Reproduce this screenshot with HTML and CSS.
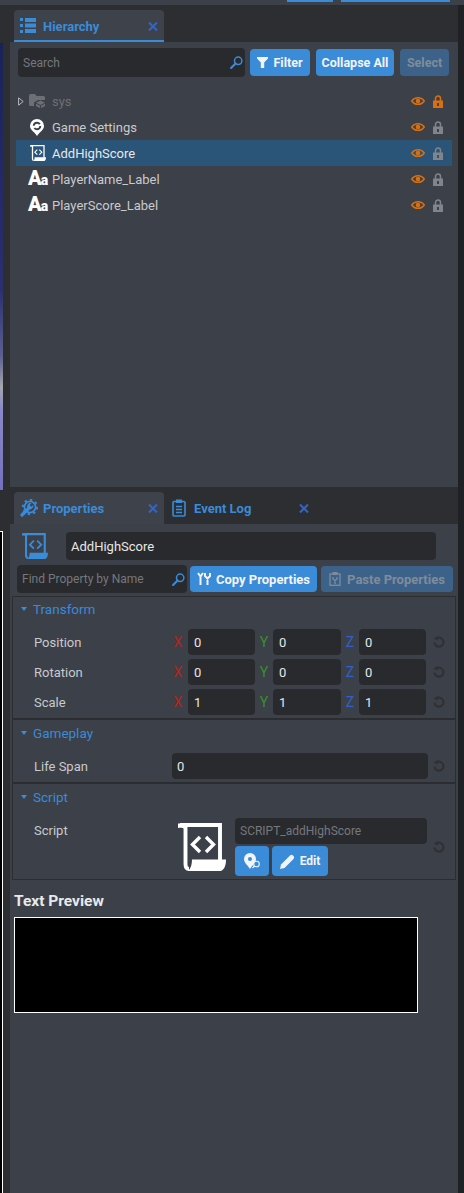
FILE: index.html
```html
<!DOCTYPE html>
<html lang="en">
<head>
    <meta charset="UTF-8">
    <title>Hierarchy and Properties</title>
    <link rel="stylesheet" href="styles.css">
</head>
<body>
    <svg class="sprite" xmlns="http://www.w3.org/2000/svg">
        <symbol id="i-list" viewBox="0 0 16 16">
            <path d="M0 0h3v3H0zM0 6h3v3H0zM0 12h3v3H0zM5 0h11v4H5zM5 5.500h11v4H5zM5 11h11v4H5z" fill="currentColor"/>
        </symbol>
        <symbol id="i-close" viewBox="0 0 10 9">
            <path d="M1 .5L9 8.500M9 .5L1 8.500" fill="none" stroke="currentColor" stroke-width="2.100"/>
        </symbol>
        <symbol id="i-gear" viewBox="0 0 18 18">
            <circle cx="10" cy="8" r="5.600" fill="none" stroke="currentColor" stroke-width="1.700"/>
            <circle cx="10" cy="8" r="7.200" fill="none" stroke="currentColor" stroke-width="1.900" stroke-dasharray="2.400 3.200"/>
            <path d="M2 16L9 9" fill="none" stroke="currentColor" stroke-width="3.200" stroke-linecap="round"/>
            <path d="M8 9.500A3.400 3.400 0 0 1 11.500 4L9.800 6.200l1.400 1.500 2.200-1.600A3.400 3.400 0 0 1 8 9.500z" fill="currentColor"/>
        </symbol>
        <symbol id="i-clipboard" viewBox="0 0 14 18">
            <rect x="1" y="2.500" width="12" height="14.500" rx="1" fill="none" stroke="currentColor" stroke-width="1.600"/>
            <rect x="4" y="0.500" width="6" height="3.500" fill="currentColor"/>
            <path d="M4 7.500h6M4 10.500h6M4 13.500h6" stroke="currentColor" stroke-width="1.500"/>
        </symbol>
        <symbol id="i-search" viewBox="0 0 14 14">
            <circle cx="8.800" cy="5.200" r="4" fill="none" stroke="currentColor" stroke-width="1.600"/>
            <path d="M6 8L1.200 12.800" stroke="currentColor" stroke-width="2.300" stroke-linecap="round"/>
        </symbol>
        <symbol id="i-funnel" viewBox="0 0 11 11">
            <path d="M0 0h11v1.600L7.200 5.400V11H3.800V5.400L0 1.600z" fill="currentColor"/>
        </symbol>
        <symbol id="i-caret" viewBox="0 0 6 9">
            <path d="M.6 .8L5.200 4.500 .6 8.200z" fill="none" stroke="currentColor" stroke-width="1"/>
        </symbol>
        <symbol id="i-eye" viewBox="0 0 14 10">
            <path d="M.8 5C3.600 .6 10.400 .6 13.200 5 10.400 9.400 3.600 9.400 .8 5z" fill="none" stroke="currentColor" stroke-width="1.500"/>
            <circle cx="7" cy="5" r="2.300" fill="currentColor"/>
        </symbol>
        <symbol id="i-lock" viewBox="0 0 10 13">
            <path d="M2.500 6V3.600a2.500 2.500 0 0 1 5 0V6" fill="none" stroke="currentColor" stroke-width="1.500"/>
            <path d="M0 5.500h10V13H0zM4 8v3h2V8z" fill="currentColor" fill-rule="evenodd"/>
        </symbol>
        <symbol id="i-reset" viewBox="0 0 12 12">
            <path d="M4.200 2A4.500 4.500 0 1 1 1.400 6.500" fill="none" stroke="currentColor" stroke-width="2.200"/>
            <path d="M.4 2.400L5 0v4.600z" fill="currentColor"/>
        </symbol>
        <symbol id="i-script" viewBox="0 0 48 48">
            <path d="M0 .5H8V7C6 4.500 2 4.500 0 5z" fill="currentColor"/>
            <path d="M2 2H42V38M7.500 3V41Q7.500 46 11 46" fill="none" stroke="currentColor" stroke-width="3.900"/>
            <path d="M10 48H43C46.500 46.500 48 42 48 36.500H14C14 41 13 45.500 10 48z" fill="currentColor"/>
            <path d="M22 14L14.500 21.500 22 29M28 14L35.500 21.500 28 29" fill="none" stroke="currentColor" stroke-width="3.400"/>
        </symbol>
        <symbol id="i-folder" viewBox="0 0 16 14">
            <path d="M0 1.500Q0 0 1.500 0H6L7.500 2H14.500Q16 2 16 3.500V6H9L5 8.500V12H1.500Q0 12 0 10.500z" fill="currentColor"/>
            <path d="M11.500 6.500L16 8.800 11.500 11 7 8.800zM7 9.800L11 11.800V14L7 12zM16 9.800L12 11.800V14L16 12z" fill="currentColor"/>
        </symbol>
        <symbol id="i-pin" viewBox="0 0 14 17">
            <path d="M7 0A7 7 0 0 1 14 7C14 11 9 13.500 7 17 5 13.500 0 11 0 7A7 7 0 0 1 7 0z" fill="currentColor"/>
            <circle cx="7" cy="7" r="3.300" fill="none" stroke="#3c4049" stroke-width="1.900" stroke-dasharray="8 2.400"/>
        </symbol>
        <symbol id="i-copy" viewBox="0 0 14 14">
            <path d="M1 1L3.500 4.500 6 1M3.500 4.500V13M8 1V4L10.500 6.500 13 4V1M10.500 6.500V13" fill="none" stroke="currentColor" stroke-width="2"/>
        </symbol>
        <symbol id="i-paste" viewBox="0 0 12 14">
            <rect x="1" y="2" width="10" height="11.300" fill="none" stroke="currentColor" stroke-width="1.300"/>
            <rect x="3.500" y="0" width="5" height="3" fill="currentColor"/>
            <path d="M4 5V7L6 8.500 8 7V5M6 8.500V12" fill="none" stroke="currentColor" stroke-width="1.300"/>
        </symbol>
        <symbol id="i-locate" viewBox="0 0 17 17">
            <path d="M6 0A6 6 0 0 1 12 6C12 10 8 12.500 6 16 4 12.500 0 10 0 6A6 6 0 0 1 6 0z" fill="currentColor"/>
            <circle cx="6" cy="6" r="2" fill="#3a8bd8"/>
            <circle cx="12.500" cy="11" r="2.800" fill="#3a8bd8" stroke="currentColor" stroke-width="1.100"/>
            <path d="M10.500 13L8.500 15" stroke="currentColor" stroke-width="1.300"/>
        </symbol>
        <symbol id="i-pencil" viewBox="0 0 15 15">
            <path d="M0 15L1 10.500 10 1.500Q11.500 0 13 1.500L13.500 2Q15 3.500 13.500 5L4.500 14z" fill="currentColor"/>
        </symbol>
    </svg>

    <header class="topbar">
        <span class="top-btn top-btn-small"></span>
        <span class="top-btn top-btn-wide"></span>
    </header>

    <div class="workspace">
        <aside class="gutter">
            <div class="scene-upper"></div>
            <div class="scene-lower"></div>
        </aside>

        <main class="docks">
            <!-- Hierarchy -->
            <section class="dock dock-hierarchy">
                <div class="tabstrip">
                    <div class="tab tab-underlined">
                        <svg class="tab-icon icon-list"><use href="#i-list"/></svg>
                        <span class="tab-title">Hierarchy</span>
                        <svg class="tab-close"><use href="#i-close"/></svg>
                    </div>
                </div>
                <div class="dock-body">
                    <div class="toolbar">
                        <div class="field search-field">
                            <span class="placeholder">Search</span>
                            <svg class="search-icon"><use href="#i-search"/></svg>
                        </div>
                        <button class="btn btn-filter"><svg class="icon-funnel"><use href="#i-funnel"/></svg>Filter</button>
                        <button class="btn btn-collapse">Collapse All</button>
                        <button class="btn btn-select" disabled>Select</button>
                    </div>

                    <ul class="tree">
                        <li class="tree-row tree-row-muted">
                            <svg class="caret"><use href="#i-caret"/></svg>
                            <span class="tree-icon"><svg class="icon-folder"><use href="#i-folder"/></svg></span>
                            <span class="tree-name">sys</span>
                            <svg class="icon-eye"><use href="#i-eye"/></svg>
                            <svg class="icon-lock icon-lock-on"><use href="#i-lock"/></svg>
                        </li>
                        <li class="tree-row">
                            <span class="caret-space"></span>
                            <span class="tree-icon"><svg class="icon-pin"><use href="#i-pin"/></svg></span>
                            <span class="tree-name">Game Settings</span>
                            <svg class="icon-eye"><use href="#i-eye"/></svg>
                            <svg class="icon-lock"><use href="#i-lock"/></svg>
                        </li>
                        <li class="tree-row tree-row-selected">
                            <span class="caret-space"></span>
                            <span class="tree-icon"><svg class="icon-script-small"><use href="#i-script"/></svg></span>
                            <span class="tree-name">AddHighScore</span>
                            <svg class="icon-eye"><use href="#i-eye"/></svg>
                            <svg class="icon-lock"><use href="#i-lock"/></svg>
                        </li>
                        <li class="tree-row">
                            <span class="caret-space"></span>
                            <span class="tree-icon text-glyph"><b>A</b><b class="text-glyph-small">a</b></span>
                            <span class="tree-name">PlayerName_Label</span>
                            <svg class="icon-eye"><use href="#i-eye"/></svg>
                            <svg class="icon-lock"><use href="#i-lock"/></svg>
                        </li>
                        <li class="tree-row">
                            <span class="caret-space"></span>
                            <span class="tree-icon text-glyph"><b>A</b><b class="text-glyph-small">a</b></span>
                            <span class="tree-name">PlayerScore_Label</span>
                            <svg class="icon-eye"><use href="#i-eye"/></svg>
                            <svg class="icon-lock"><use href="#i-lock"/></svg>
                        </li>
                    </ul>
                </div>
            </section>

            <!-- Properties -->
            <section class="dock dock-properties">
                <div class="tabstrip">
                    <div class="tab">
                        <svg class="tab-icon icon-gear"><use href="#i-gear"/></svg>
                        <span class="tab-title">Properties</span>
                        <svg class="tab-close"><use href="#i-close"/></svg>
                    </div>
                    <div class="tab tab-idle">
                        <svg class="tab-icon icon-clipboard"><use href="#i-clipboard"/></svg>
                        <span class="tab-title">Event Log</span>
                        <svg class="tab-close"><use href="#i-close"/></svg>
                    </div>
                </div>
                <div class="dock-body">
                    <div class="name-row">
                        <svg class="icon-script-head"><use href="#i-script"/></svg>
                        <div class="field name-field">AddHighScore</div>
                    </div>

                    <div class="find-row">
                        <div class="field find-field">
                            <span class="placeholder">Find Property by Name</span>
                            <svg class="search-icon"><use href="#i-search"/></svg>
                        </div>
                        <button class="btn btn-copy"><svg class="icon-copy"><use href="#i-copy"/></svg>Copy Properties</button>
                        <button class="btn btn-paste" disabled><svg class="icon-paste"><use href="#i-paste"/></svg>Paste Properties</button>
                    </div>

                    <div class="sections">
                        <section class="group">
                            <h3 class="group-title"><span class="twist"></span>Transform</h3>
                            <div class="group-body group-transform">
                                <div class="prop">
                                    <span class="prop-label">Position</span>
                                    <span class="axis axis-x">X</span><div class="field vec">0</div>
                                    <span class="axis axis-y">Y</span><div class="field vec vec-mid">0</div>
                                    <span class="axis axis-z">Z</span><div class="field vec">0</div>
                                    <svg class="icon-reset"><use href="#i-reset"/></svg>
                                </div>
                                <div class="prop">
                                    <span class="prop-label">Rotation</span>
                                    <span class="axis axis-x">X</span><div class="field vec">0</div>
                                    <span class="axis axis-y">Y</span><div class="field vec vec-mid">0</div>
                                    <span class="axis axis-z">Z</span><div class="field vec">0</div>
                                    <svg class="icon-reset"><use href="#i-reset"/></svg>
                                </div>
                                <div class="prop">
                                    <span class="prop-label">Scale</span>
                                    <span class="axis axis-x">X</span><div class="field vec">1</div>
                                    <span class="axis axis-y">Y</span><div class="field vec vec-mid">1</div>
                                    <span class="axis axis-z">Z</span><div class="field vec">1</div>
                                    <svg class="icon-reset"><use href="#i-reset"/></svg>
                                </div>
                            </div>
                        </section>

                        <section class="group">
                            <h3 class="group-title"><span class="twist"></span>Gameplay</h3>
                            <div class="group-body group-gameplay">
                                <div class="prop">
                                    <span class="prop-label prop-label-wide">Life Span</span>
                                    <div class="field life-field">0</div>
                                    <svg class="icon-reset icon-reset-near"><use href="#i-reset"/></svg>
                                </div>
                            </div>
                        </section>

                        <section class="group group-last">
                            <h3 class="group-title"><span class="twist"></span>Script</h3>
                            <div class="group-body group-script">
                                <div class="script-prop">
                                    <span class="prop-label prop-label-wide">Script</span>
                                    <svg class="icon-script-big"><use href="#i-script"/></svg>
                                    <div class="script-picker">
                                        <div class="field script-field">SCRIPT_addHighScore</div>
                                        <div class="script-actions">
                                            <button class="btn btn-locate"><svg class="icon-locate"><use href="#i-locate"/></svg></button>
                                            <button class="btn btn-edit"><svg class="icon-pencil"><use href="#i-pencil"/></svg>Edit</button>
                                        </div>
                                    </div>
                                    <svg class="icon-reset icon-reset-script"><use href="#i-reset"/></svg>
                                </div>
                            </div>
                        </section>
                    </div>

                    <h2 class="preview-title">Text Preview</h2>
                    <div class="preview-box"></div>
                </div>
            </section>
        </main>

        <div class="edge"></div>
    </div>
</body>
</html>
```

FILE: styles.css
```css
* {
    box-sizing: border-box;
}

html, body {
    margin: 0;
    height: 100%;
    overflow: hidden;
}

body {
    display: flex;
    flex-direction: column;
    font-family: Roboto, "Liberation Sans", sans-serif;
    font-size: 13px;
    color: #c8cacc;
    background: #2d2e31;
}

svg {
    display: block;
    flex: none;
}

.sprite {
    display: none;
}

/* top strip */
.topbar {
    display: flex;
    flex: none;
    height: 5px;
    padding-left: 287px;
    gap: 8px;
    background: #3c4049;
}

.top-btn {
    height: 2px;
    background: #3a8bd8;
}

.top-btn-small {
    width: 46px;
}

.top-btn-wide {
    width: 109px;
}

.workspace {
    display: grid;
    grid-template-columns: 10px 448px 6px;
    flex: 1;
    min-height: 0;
}

/* what is left of the scene view */
.gutter {
    display: flex;
    flex-direction: column;
}

.scene-upper {
    width: 3px;
    height: 447px;
    margin-top: 38px;
    background: linear-gradient(#1a2358 0, #2a2f70 55%, #5c5f90 70%, #a5a6ae 77%, #8a88c8 82%, #7470bc 100%);
}

.scene-lower {
    flex: 1;
    width: 3px;
    margin-top: 41px;
    background: #000;
    border-top: 1px solid #fff;
    border-right: 1px solid #fff;
}

.edge {
    background: #202124;
}

.docks {
    display: flex;
    flex-direction: column;
    min-height: 0;
}

.dock {
    display: flex;
    flex-direction: column;
}

.dock-hierarchy {
    height: 482px;
}

.dock-properties {
    flex: 1;
    min-height: 0;
}

.dock-body {
    flex: 1;
    min-height: 0;
    background: #3c4049;
}

/* tabs */
.tabstrip {
    display: flex;
    flex: none;
    height: 37px;
    padding: 5px 0 0 4px;
}

.tab {
    display: flex;
    align-items: center;
    width: 150px;
    padding-left: 6px;
    padding-right: 6px;
    border-radius: 4px 4px 0 0;
    background: #3e424b;
}

.tab-underlined {
    padding-top: 2px;
    border-bottom: 2px solid #3a8bd8;
}

.tab-idle {
    padding-left: 8px;
    padding-right: 5px;
    background: none;
}

.tab-icon {
    color: #3a8bd8;
}

.icon-list {
    width: 16px;
    height: 16px;
    margin-right: 7px;
}

.icon-gear {
    width: 18px;
    height: 18px;
    margin-right: 5px;
}

.icon-clipboard {
    width: 14px;
    height: 18px;
    margin-right: 8px;
}

.tab-title {
    flex: 1;
    font-weight: 700;
    color: #3a8bd8;
}

.tab-close {
    width: 10px;
    height: 9px;
    color: #3464c4;
}

/* inputs and buttons */
.field {
    display: flex;
    align-items: center;
    height: 26px;
    padding: 0 5px;
    border-radius: 4px;
    color: #e6e7e8;
    background: #292a2d;
}

.placeholder {
    flex: 1;
    font-size: 12px;
    color: #75787d;
}

.search-icon {
    width: 13px;
    height: 13px;
    margin-right: -3px;
    color: #3a8bd8;
}

.btn {
    display: flex;
    align-items: center;
    justify-content: center;
    height: 27px;
    padding: 0;
    border: none;
    border-radius: 4px;
    font-family: inherit;
    font-size: 13px;
    font-weight: 700;
    color: #f2f4f6;
    background: #3a8bd8;
}

.btn[disabled] {
    color: #7f8c99;
    background: #3d6289;
}

/* hierarchy */
.toolbar {
    display: flex;
    align-items: center;
    gap: 6px;
    padding: 6px 9px 0 8px;
}

.toolbar .btn {
    font-size: 12.500px;
}

.search-field {
    width: 227px;
    height: 29px;
    margin-right: -1px;
}

.btn-filter {
    width: 60px;
}

.icon-funnel {
    width: 11px;
    height: 11px;
    margin-right: 5px;
}

.btn-collapse {
    width: 78px;
}

.btn-select {
    width: 49px;
}

.tree {
    margin: 11px 6px 0;
    padding: 0;
    list-style: none;
}

.tree-row {
    display: flex;
    align-items: center;
    height: 26px;
    padding: 0 9px 0 2px;
}

.tree-row-selected {
    color: #e6e8ea;
    background: #2a5478;
}

.tree-row-muted {
    color: #6c6f74;
}

.caret {
    width: 6px;
    height: 9px;
    margin-right: 4px;
    color: #b5b7ba;
}

.caret-space {
    width: 10px;
}

.tree-icon {
    display: flex;
    align-items: center;
    width: 24px;
    color: #fff;
}

.tree-name {
    flex: 1;
}

.icon-folder {
    width: 16px;
    height: 14px;
    margin-left: 1px;
    color: #6c6f74;
}

.icon-pin {
    width: 14px;
    height: 17px;
    margin-left: 2px;
}

.icon-script-small {
    width: 16px;
    height: 18px;
    margin-left: 2px;
}

.text-glyph {
    align-items: baseline;
    font-size: 20px;
    line-height: 22px;
}

.text-glyph b {
    font-weight: 900;
}

.text-glyph .text-glyph-small {
    margin-left: -1px;
    font-size: 14px;
}

.icon-eye {
    width: 14px;
    height: 10px;
    margin-right: 8px;
    color: #d9700f;
}

.icon-lock {
    width: 10px;
    height: 13px;
    color: #80848b;
}

.icon-lock-on {
    color: #d9700f;
}

/* properties header */
.name-row {
    display: flex;
    align-items: center;
    height: 28px;
    margin-top: 8px;
    padding-left: 12px;
}

.icon-script-head {
    width: 26px;
    height: 26px;
    margin-right: 18px;
    color: #3a8bd8;
}

.name-field {
    width: 370px;
    height: 28px;
}

.find-row {
    display: flex;
    align-items: center;
    height: 28px;
    margin-top: 5px;
    padding-left: 7px;
}

.find-field {
    width: 170px;
    height: 28px;
}

.btn-copy {
    width: 127px;
    height: 26px;
    margin-left: 3px;
}

.icon-copy {
    width: 14px;
    height: 14px;
    margin-right: 5px;
}

.btn-paste {
    width: 132px;
    height: 26px;
    margin-left: 4px;
}

.icon-paste {
    width: 12px;
    height: 14px;
    margin-right: 6px;
}

/* property groups */
.sections {
    margin: 3px 2px 0;
    border: 1px solid #2b2d31;
}

.group {
    border-bottom: 2px solid #2b2d31;
}

.group-last {
    border-bottom: none;
}

.group-title {
    display: flex;
    align-items: center;
    height: 25px;
    margin: 0;
    padding-left: 8px;
    padding-bottom: 2px;
    font-size: 13.500px;
    font-weight: 400;
    color: #3a8bd8;
}

.group + .group .group-title {
    height: 27px;
}

.twist {
    width: 0;
    height: 0;
    margin-right: 6px;
    border-top: 4px solid #3a8bd8;
    border-left: 3px solid transparent;
    border-right: 3px solid transparent;
}

.group-body {
    padding-left: 21px;
}

.group-transform {
    display: flex;
    flex-direction: column;
    gap: 4px;
    padding-top: 7px;
    padding-bottom: 3px;
}

.group-gameplay {
    padding-top: 6px;
    padding-bottom: 3px;
}

.group-script {
    padding-top: 7px;
    padding-bottom: 3px;
}

.prop {
    display: flex;
    align-items: center;
    height: 26px;
}

.prop-label {
    width: 134px;
}

.prop-label-wide {
    width: 138px;
}

.axis {
    width: 18px;
    font-size: 14px;
    text-align: center;
}

.axis-x {
    width: 20px;
    color: #b5241e;
}

.axis-y {
    color: #3a8f2e;
}

.axis-z {
    color: #2f62c8;
}

.vec {
    width: 67px;
    padding-left: 6px;
}

.vec-mid {
    width: 68px;
}

.icon-reset {
    width: 12px;
    height: 12px;
    margin-left: 7px;
    color: #303134;
}

.icon-reset-near {
    margin-left: 5px;
}

.life-field {
    width: 256px;
}

.script-prop {
    display: flex;
    align-items: flex-start;
}

.script-prop .prop-label {
    line-height: 26px;
}

.icon-script-big {
    width: 48px;
    height: 48px;
    margin: 5px 0 0 6px;
    color: #fff;
}

.script-picker {
    width: 192px;
    margin-left: 9px;
}

.script-field {
    color: #75787d;
    font-size: 12px;
}

.script-actions {
    display: flex;
    gap: 3px;
    margin-top: 2px;
}

.btn-locate {
    width: 34px;
    height: 30px;
}

.icon-locate {
    width: 17px;
    height: 17px;
}

.btn-edit {
    width: 56px;
    height: 30px;
    font-size: 12px;
}

.icon-pencil {
    width: 15px;
    height: 15px;
    margin-right: 5px;
}

.icon-reset-script {
    margin: 23px 0 0 6px;
}

/* preview */
.preview-title {
    height: 20px;
    margin: 11px 0 6px 4px;
    font-size: 15.500px;
    font-weight: 700;
    line-height: 20px;
    color: #e8e9ea;
}

.preview-box {
    width: 404px;
    height: 96px;
    margin-left: 4px;
    background: #000;
    border: 1px solid #fff;
}
```
